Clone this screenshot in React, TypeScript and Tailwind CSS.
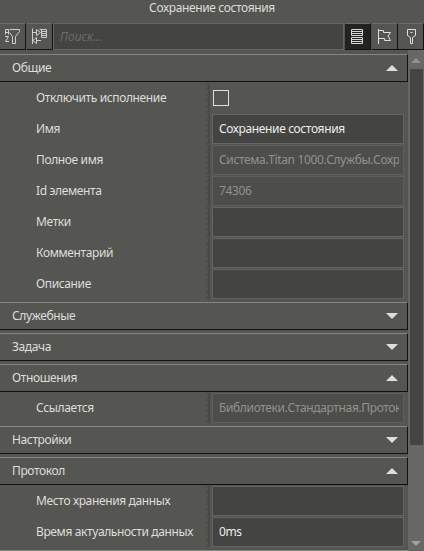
import { useState } from 'react';
import type { ReactNode } from 'react';

type Field = {
  label: string;
  value?: string;
  type?: 'checkbox' | 'text';
  readOnly?: boolean;
};

type Section = {
  id: string;
  title: string;
  open: boolean;
  fields: Field[];
};

const initialSections: Section[] = [
  {
    id: 'general',
    title: 'Общие',
    open: true,
    fields: [
      { label: 'Отключить исполнение', type: 'checkbox' },
      { label: 'Имя', value: 'Сохранение состояния' },
      { label: 'Полное имя', value: 'Система.Titan 1000.Службы.Сохр', readOnly: true },
      { label: 'Id элемента', value: '74306', readOnly: true },
      { label: 'Метки' },
      { label: 'Комментарий' },
      { label: 'Описание' },
    ],
  },
  { id: 'service', title: 'Служебные', open: false, fields: [] },
  { id: 'task', title: 'Задача', open: false, fields: [] },
  {
    id: 'relations',
    title: 'Отношения',
    open: true,
    fields: [{ label: 'Ссылается', value: 'Библиотеки.Стандартная.Проток', readOnly: true }],
  },
  { id: 'settings', title: 'Настройки', open: false, fields: [] },
  {
    id: 'protocol',
    title: 'Протокол',
    open: true,
    fields: [{ label: 'Место хранения данных' }, { label: 'Время актуальности данных', value: '0ms' }],
  },
];

function SortFilterIcon() {
  return (
    <svg width="17" height="17" viewBox="0 0 17 17" fill="none" stroke="#cfcfcc">
      <path d="M1.5 6.5V1.5H4.5V6.5M1.5 4.5H4.5M1 8.5H4.5L1.5 13.5H5" />
      <path d="M5.5 1.5H15.5V3.5L11.5 8.5V15.5H8.5V8.5L5.5 4.5" />
    </svg>
  );
}

function TreeIcon() {
  return (
    <svg width="17" height="17" viewBox="0 0 17 17" fill="none" stroke="#cfcfcc">
      <path d="M1.5 0.5V16M2 4.5H6M5.5 1.5V7.5L9.5 4.5Z" />
      <path d="M5.5 9.5L2 12.5L5.5 15.5V9.5M5 12.5H10" />
      <path d="M8.5 1.5H15.5V9.5H10.5V1.5M10 3.5H15.5M10 5.5H15.5M10 7.5H15.5" />
    </svg>
  );
}

function ListIcon() {
  return (
    <svg width="13" height="17" viewBox="0 0 13 17" fill="none" stroke="#d8d8d5">
      <path d="M0.5 1.5H11.5V7.5H0.5ZM0.5 3.5H11.5M0.5 5.5H11.5M0.5 9.5H11.5V15.5H0.5ZM0.5 11.5H11.5M0.5 13.5H11.5" />
    </svg>
  );
}

function FlagIcon() {
  return (
    <svg width="15" height="17" viewBox="0 0 15 17" fill="none" stroke="#dededb">
      <path d="M1.5 1V16M1.5 2.5H6.5V4.5H13.5L11 8L13.5 12.5H7.5V10.5H1.5" />
    </svg>
  );
}

function PinIcon() {
  return (
    <svg width="13" height="17" viewBox="0 0 13 17" fill="none" stroke="#dededb">
      <path d="M3.5 1.5H11.5V7.5L8.5 9.5V15.5H6.5V9.5L3.5 7.5Z" />
      <path d="M6.5 4.5H8.5" />
    </svg>
  );
}

function ToolButton({ children, active = false }: { children: ReactNode; active?: boolean }) {
  return (
    <button
      className={`flex h-[27px] w-[26px] shrink-0 items-center justify-center border-t border-r border-b border-t-[#6b6b68] border-r-[#111111] border-b-[#111111] ${
        active ? 'bg-[#222221]' : 'bg-[#555552]'
      }`}
    >
      {children}
    </button>
  );
}

function Arrow({ up }: { up: boolean }) {
  return (
    <svg width="12" height="6" viewBox="0 0 12 6" fill="#dededb">
      {up ? <path d="M0 6L6 0L12 6Z" /> : <path d="M0 0H12L6 6Z" />}
    </svg>
  );
}

function FieldRow({ field }: { field: Field }) {
  return (
    <div className="flex h-[31px]">
      <div className="flex h-[30px] w-[206px] items-center pl-9 whitespace-nowrap text-[#dededb]">{field.label}</div>
      <div className="flex h-[30px] w-1 justify-end bg-[repeating-linear-gradient(135deg,#4d4d4b_0px,#4d4d4b_2px,#555552_2px,#555552_4px)]">
        <div className="w-0.5 bg-[#444442]/60" />
      </div>
      {field.type === 'checkbox' ? (
        <div className="flex h-[30px] items-center pl-[3px]">
          <input type="checkbox" className="size-4 appearance-none border border-[#dededb]" />
        </div>
      ) : (
        <div
          className={`ml-0.5 flex h-[30px] w-[192px] items-center border pr-1 pl-1.5 ${
            field.readOnly ? 'border-[#5f5f5c] bg-[#4d4d4a] text-[#92928f]' : 'border-[#656562] bg-[#444442] text-[#eeeeeb]'
          }`}
        >
          <span className="w-full overflow-hidden whitespace-nowrap">{field.value}</span>
        </div>
      )}
    </div>
  );
}

function App() {
  const [sections, setSections] = useState(initialSections);

  const toggle = (id: string) => {
    setSections(sections.map((s) => (s.id === id ? { ...s, open: !s.open } : s)));
  };

  return (
    <div className="flex h-[551px] w-[424px] flex-col overflow-hidden bg-[#555552] font-['Noto_Sans',sans-serif] text-[12px] leading-4 tracking-[-0.37px]">
      <div className="h-[23px] shrink-0 text-center text-[#dededb]">Сохранение состояния</div>
      <div className="flex h-[27px] shrink-0">
        <ToolButton>
          <SortFilterIcon />
        </ToolButton>
        <div className="w-px" />
        <ToolButton>
          <TreeIcon />
        </ToolButton>
        <input
          placeholder="Поиск..."
          className="w-[291px] border border-[#656562] bg-[#444442] px-1.5 tracking-normal text-[#eeeeeb] italic outline-none placeholder:text-[#6c6c69]"
        />
        <div className="w-px" />
        <ToolButton active>
          <ListIcon />
        </ToolButton>
        <div className="w-px" />
        <ToolButton>
          <FlagIcon />
        </ToolButton>
        <ToolButton>
          <PinIcon />
        </ToolButton>
      </div>

      <div className="flex min-h-0 flex-1">
        <div className="w-[408px] overflow-hidden pt-1">
          {sections.map((section) => (
            <div key={section.id} className="mb-[3px]">
              <button
                onClick={() => toggle(section.id)}
                className="flex h-7 w-full items-center justify-between border-t border-r border-b border-t-[#858582] border-r-[#111111] border-b-[#111111] pr-[9px] pl-3 tracking-[-0.37px] text-[#dededb]"
              >
                <span>{section.title}</span>
                <Arrow up={section.open} />
              </button>
              {section.open && (
                <div className="-mb-px pt-px">
                  {section.fields.map((field) => (
                    <FieldRow key={field.label} field={field} />
                  ))}
                </div>
              )}
            </div>
          ))}
          <div className="h-px bg-[#858582]" />
        </div>
        <div className="flex w-4 flex-col items-center bg-[#676764] pt-2 pb-[5px]">
          <svg width="10" height="5" viewBox="0 0 10 5" fill="#92928f">
            <path d="M0 5L5 0L10 5Z" />
          </svg>
          <div className="mt-[6px] ml-px h-[376px] w-[13px] bg-[#444442]" />
          <svg className="mt-auto" width="10" height="5" viewBox="0 0 10 5" fill="#a0a09d">
            <path d="M0 0H10L5 5Z" />
          </svg>
        </div>
      </div>
    </div>
  );
}

export default App;
